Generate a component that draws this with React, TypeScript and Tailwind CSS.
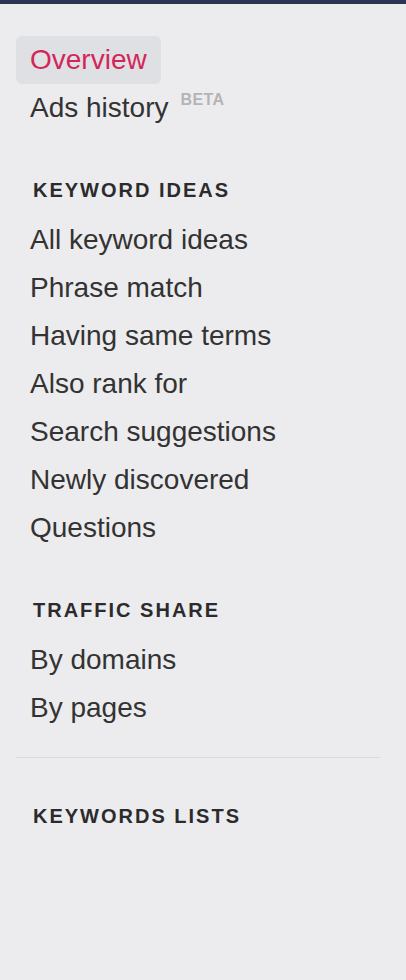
import React from "react";

const keywordIdeas = [
  "All keyword ideas",
  "Phrase match",
  "Having same terms",
  "Also rank for",
  "Search suggestions",
  "Newly discovered",
  "Questions",
];

const trafficShare = ["By domains", "By pages"];

const font = { fontFamily: '"Liberation Sans", Arial, Helvetica, sans-serif' };

const NavItem: React.FC<{ label: string; active?: boolean; badge?: string }> = ({
  label,
  active,
  badge,
}) => (
  <div
    className={`flex h-12 items-center self-start rounded-md px-[14px] text-[28px] ${
      active ? "bg-[#dfe0e4] text-[#d2265a]" : "text-[#333333]"
    }`}
  >
    <span>{label}</span>
    {badge && (
      <span className="-mt-4 ml-3 text-[16px] font-bold tracking-wide text-[#b4b4b6]">
        {badge}
      </span>
    )}
  </div>
);

const SectionTitle: React.FC<{ title: string }> = ({ title }) => (
  <div className="mt-[46px] mb-[14px] flex h-6 items-center pl-[17px] text-[20px] font-bold uppercase tracking-[0.1em] text-[#2b2b2d]">
    {title}
  </div>
);

export default function App() {
  return (
    <div className="min-h-[980px] w-[406px] bg-[#ececee]" style={font}>
      <div className="h-1 bg-[#2d3554]" />
      <div className="flex flex-col pl-4 pr-[26px] pt-8">
        <NavItem label="Overview" active />
        <NavItem label="Ads history" badge="BETA" />

        <SectionTitle title="Keyword ideas" />
        {keywordIdeas.map((k) => (
          <NavItem key={k} label={k} />
        ))}

        <SectionTitle title="Traffic share" />
        {trafficShare.map((k) => (
          <NavItem key={k} label={k} />
        ))}

        <div className="mt-[25px] h-px bg-[#dadadc]" />

        <SectionTitle title="Keywords lists" />
      </div>
    </div>
  );
}
